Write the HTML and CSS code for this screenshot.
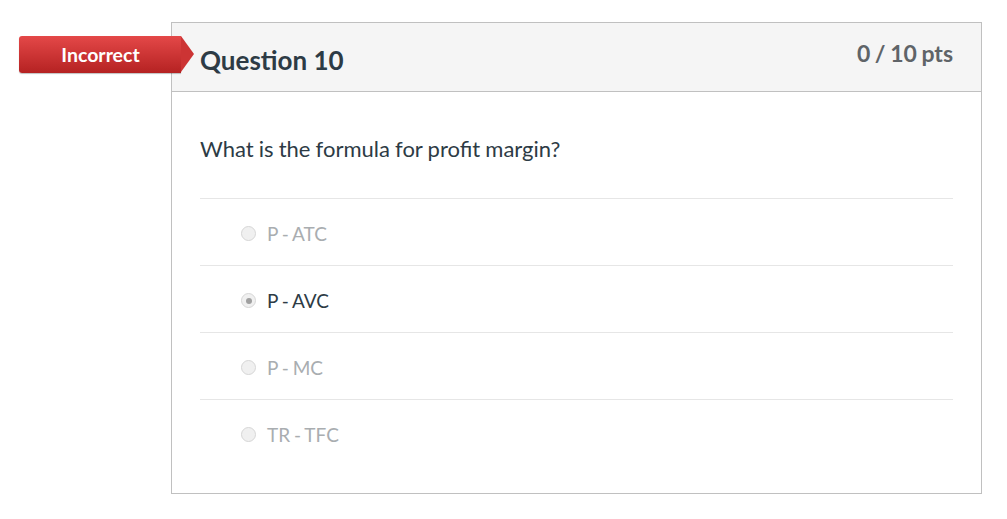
FILE: index.html
```html
<!DOCTYPE html>
<html>
<head>
<meta charset="utf-8">
<link rel="stylesheet" href="styles.css">
</head>
<body>
<div class="page">
  <div class="card">
    <div class="badge">Incorrect</div>
    <div class="header">
      <h2 class="title">Question 10</h2>
      <div class="points">0 / 10 pts</div>
    </div>
    <div class="body">
      <p class="question">What is the formula for profit margin?</p>
      <div class="answers">
        <div class="answer"><span class="radio"></span><span class="label">P - ATC</span></div>
        <div class="answer selected"><span class="radio"></span><span class="label">P - AVC</span></div>
        <div class="answer"><span class="radio"></span><span class="label">P - MC</span></div>
        <div class="answer"><span class="radio"></span><span class="label">TR - TFC</span></div>
      </div>
    </div>
  </div>
</div>
</body>
</html>
```
FILE: styles.css
```css
html, body {
  margin: 0;
  padding: 0;
  background: #fff;
  font-family: Lato, "Open Sans", sans-serif;
  color: #2d3b45;
}
.page {
  padding: 22px 0 0 171px;
}
.card {
  position: relative;
  width: 809px;
  height: 470px;
  border: 1px solid #c0c0c0;
}
.badge {
  position: absolute;
  left: -153px;
  top: 13px;
  width: 162px;
  height: 37px;
  line-height: 37px;
  text-align: center;
  padding-left: 1px;
  box-sizing: border-box;
  color: #fff;
  font-weight: 700;
  font-size: 19.5px;
  word-spacing: -1px;
  background: linear-gradient(#e44848, #b52222);
  border-radius: 3px 0 0 3px;
  box-shadow: 0 1px 1px rgba(0,0,0,0.25);
}
.badge::after {
  content: "";
  position: absolute;
  right: -13px;
  top: 0;
  border-top: 18.5px solid transparent;
  border-bottom: 18.5px solid transparent;
  border-left: 13px solid #cc3434;
}
.header {
  background: #f5f5f5;
  border-bottom: 1px solid #c0c0c0;
  height: 68px;
  display: flex;
  justify-content: space-between;
  align-items: flex-start;
  padding: 0 28px;
}
.title {
  margin: 0;
  padding-top: 22px;
  font-size: 26px;
  font-weight: 700;
  line-height: 30px;
  color: #2d3b45;
}
.points {
  padding-top: 15px;
  font-size: 23px;
  font-weight: 700;
  line-height: 30px;
  word-spacing: -1px;
  color: #5f6468;
}
.body {
  padding: 0 28px;
}
.question {
  margin: 0;
  padding: 43px 0 35px;
  font-size: 22px;
  line-height: 28px;
  word-spacing: -0.5px;
  color: #2d3b45;
}
.answer {
  border-top: 1px solid #e6e6e6;
  display: flex;
  align-items: center;
  padding-left: 41px;
  padding-top: 3px;
  box-sizing: border-box;
  height: 67px;
}
.answer:last-child {
  height: 66px;
}
.radio {
  width: 13px;
  height: 13px;
  border-radius: 50%;
  border: 1px solid #d6d6d6;
  background: #f0f0f0;
  margin-right: 11px;
  position: relative;
}
.selected .radio::after {
  content: "";
  position: absolute;
  left: 3.5px;
  top: 3.5px;
  width: 6px;
  height: 6px;
  border-radius: 50%;
  background: #a0a0a0;
}
.label {
  font-size: 19px;
  word-spacing: -1px;
  color: #a9adb0;
}
.selected .label {
  color: #2d3b45;
}
```
